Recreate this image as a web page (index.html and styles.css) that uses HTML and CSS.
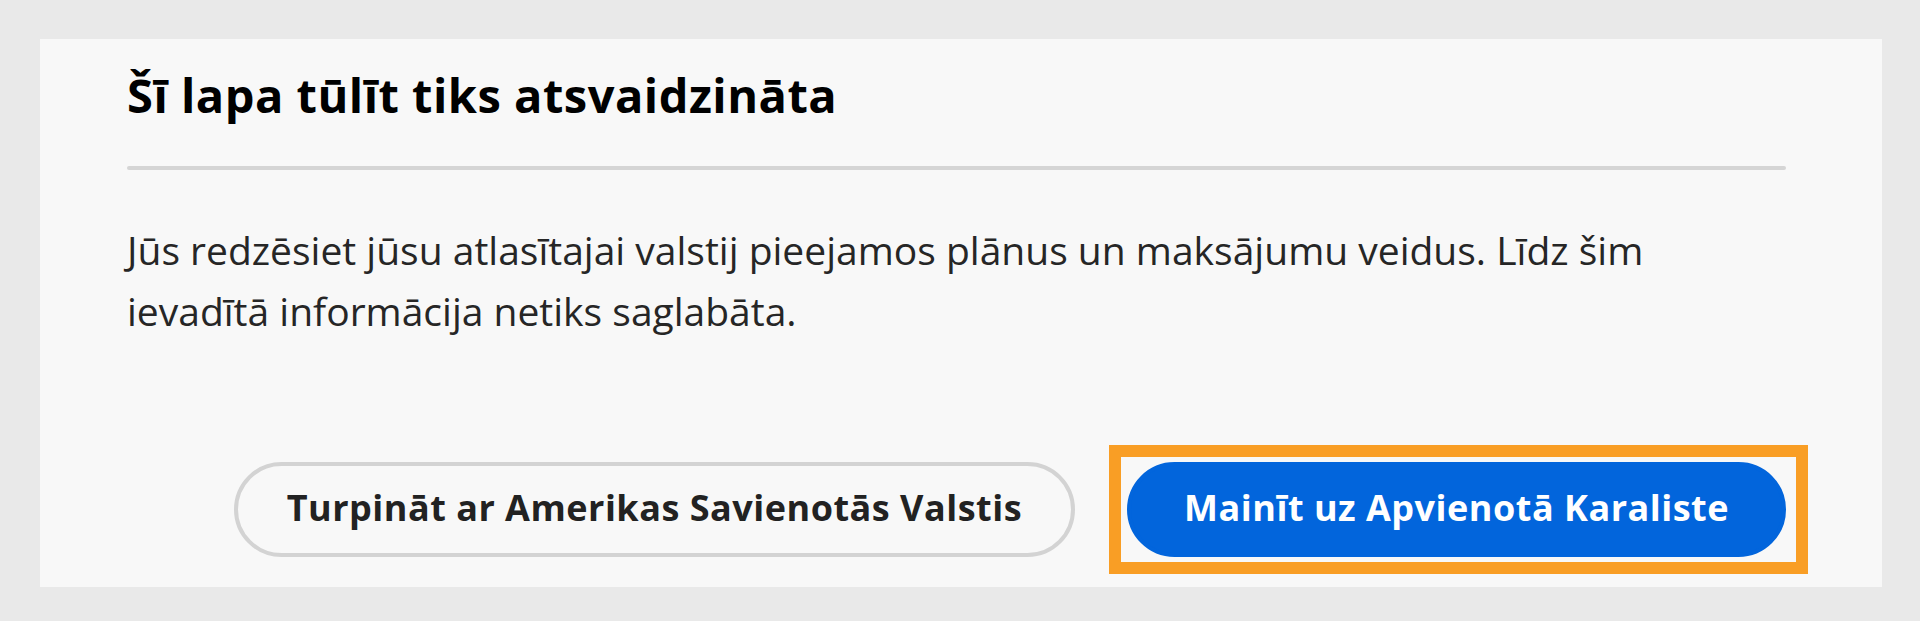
FILE: index.html
```html
<!DOCTYPE html>
<html lang="lv">
<head>
<meta charset="utf-8">
<title>Šī lapa tūlīt tiks atsvaidzināta</title>
<link rel="stylesheet" href="styles.css">
</head>
<body>
  <section class="dialog">
    <h1 class="dialog-title">Šī lapa tūlīt tiks atsvaidzināta</h1>
    <hr class="dialog-divider">
    <p class="dialog-text">Jūs redzēsiet jūsu atlasītajai valstij pieejamos plānus un maksājumu veidus. Līdz šim ievadītā informācija netiks saglabāta.</p>
    <div class="dialog-actions">
      <button class="btn btn-secondary" type="button">Turpināt ar Amerikas Savienotās Valstis</button>
      <button class="btn btn-primary" type="button">Mainīt uz Apvienotā Karaliste<span class="highlight"></span></button>
    </div>
  </section>
</body>
</html>
```

FILE: styles.css
```css
html, body {
  margin: 0;
  padding: 0;
}

body {
  background: #e9e9e9;
  padding: 39px 38px 33px 40px;
  font-family: "Open Sans", "Noto Sans", sans-serif;
  color: #222;
}

.dialog {
  background: #f8f8f8;
  padding: 28px 96px 30px 87px;
  display: flex;
  flex-direction: column;
}

.dialog-title {
  margin: 0;
  font-size: 47px;
  line-height: 56px;
  font-weight: 700;
  letter-spacing: 0.5px;
  color: #000;
}

.dialog-divider {
  margin: 43px 0 0;
  height: 4px;
  border: 0;
  border-radius: 2px;
  background: #d5d5d5;
}

.dialog-text {
  margin: 49px 0 0;
  font-size: 39px;
  line-height: 61px;
  color: #262626;
}

.dialog-actions {
  margin-top: 121px;
  display: flex;
  justify-content: flex-end;
  gap: 52px;
}

.btn {
  position: relative;
  box-sizing: border-box;
  height: 95px;
  padding: 0 49px 4px;
  border: 4px solid;
  border-radius: 48px;
  display: flex;
  align-items: center;
  font-family: "Open Sans", "Noto Sans", sans-serif;
  font-size: 36px;
  font-weight: 700;
  letter-spacing: 0.5px;
  cursor: pointer;
}

.btn-secondary {
  background: #f8f8f8;
  border-color: #d3d3d3;
  color: #222;
}

.btn-primary {
  padding: 0 53px 4px;
  background: #0265dc;
  border-color: #0265dc;
  color: #fff;
}

.highlight {
  position: absolute;
  top: -21px;
  bottom: -21px;
  left: -22px;
  right: -26px;
  border: 12px solid #f99e25;
  pointer-events: none;
}
```
